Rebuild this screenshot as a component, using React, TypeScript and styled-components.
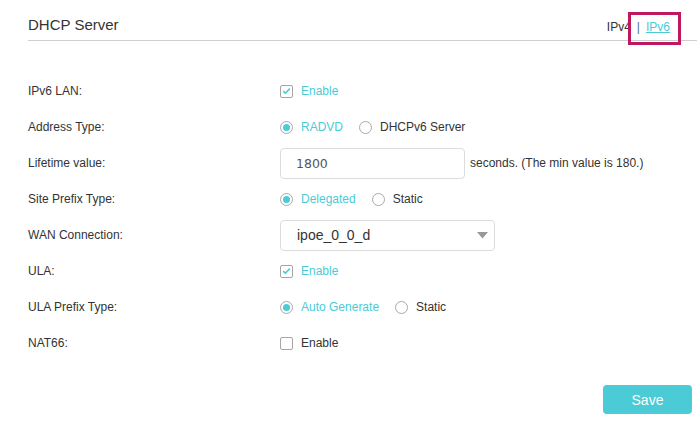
import React from "react";
import styled, { createGlobalStyle } from "styled-components";

const Global = createGlobalStyle`
  html, body { margin: 0; padding: 0; background: #fff; }
  body { font-family: "Liberation Sans", Arial, sans-serif; color: #333; }
`;

const CYAN = "#4acbd6";

const Page = styled.div`
  width: 697px;
  height: 424px;
  box-sizing: border-box;
  padding-left: 28px;
  display: flex;
  flex-direction: column;
`;

const Header = styled.div`
  height: 40px;
  border-bottom: 1px solid #cfcfcf;
  display: flex;
  align-items: flex-end;
  justify-content: space-between;
  box-sizing: content-box;
`;

const Title = styled.h2`
  margin: 0 0 6px 0;
  font-size: 15px;
  font-weight: normal;
  line-height: 18px;
  color: #333;
`;

const Switcher = styled.div`
  display: flex;
  align-items: center;
  font-size: 12px;
  line-height: 14px;
  margin: 0 27px 6px 0;
  color: #333;
`;

const Sep = styled.span`
  margin: 0 6px;
  color: #4a6f9c;
`;

const ActiveLink = styled.a`
  position: relative;
  display: inline-block;
  color: ${CYAN};
  text-decoration: underline;
  cursor: pointer;
  &::after {
    content: "";
    position: absolute;
    left: -18px;
    top: -8px;
    width: 47px;
    height: 27px;
    border: 3px solid #c0185e;
  }
`;

const Form = styled.div`
  margin-top: 32px;
  display: flex;
  flex-direction: column;
`;

const Row = styled.div`
  height: 36px;
  display: flex;
  align-items: center;
`;

const Label = styled.div`
  width: 252px;
  font-size: 12px;
  color: #333;
  flex-shrink: 0;
`;

const Controls = styled.div`
  display: flex;
  align-items: center;
  gap: 16px;
`;

const Option = styled.label<{ $active?: boolean }>`
  display: flex;
  align-items: center;
  gap: 8px;
  font-size: 12px;
  color: ${(p) => (p.$active ? CYAN : "#333")};
`;

const RadioCircle = styled.span<{ $on?: boolean }>`
  width: 11px;
  height: 11px;
  border: 1px solid #a9a9a9;
  border-radius: 50%;
  display: inline-flex;
  align-items: center;
  justify-content: center;
  &::after {
    content: "";
    width: 7px;
    height: 7px;
    border-radius: 50%;
    background: ${(p) => (p.$on ? CYAN : "transparent")};
  }
`;

const CheckBox = styled.span`
  width: 11px;
  height: 11px;
  border: 1px solid #a5a5a5;
  border-radius: 2px;
  display: inline-flex;
  align-items: center;
  justify-content: center;
`;

const TextBox = styled.div`
  width: 185px;
  height: 31px;
  box-sizing: border-box;
  border: 1px solid #dcdcdc;
  border-radius: 4px;
  display: flex;
  align-items: center;
  padding-left: 15px;
  font-family: "DejaVu Sans", Verdana, sans-serif;
  font-size: 12.5px;
  color: #555;
`;

const Hint = styled.span`
  margin-left: 5px;
  font-size: 12px;
  color: #333;
`;

const SelectBox = styled.div`
  width: 215px;
  height: 31px;
  box-sizing: border-box;
  border: 1px solid #dcdcdc;
  border-radius: 4px;
  display: flex;
  align-items: center;
  justify-content: space-between;
  padding: 0 6px 0 16px;
  font-size: 14px;
  color: #333;
`;

const Footer = styled.div`
  display: flex;
  justify-content: flex-end;
  padding-right: 5px;
  margin-top: 24px;
`;

const SaveButton = styled.button`
  width: 89px;
  height: 29px;
  border: none;
  border-radius: 4px;
  background: ${CYAN};
  color: #fff;
  font-family: "Liberation Sans", Arial, sans-serif;
  font-size: 14px;
  cursor: pointer;
`;

const Radio = ({ on, text }: { on?: boolean; text: string }) => (
  <Option $active={on}>
    <RadioCircle $on={on} />
    {text}
  </Option>
);

const Check = ({ on, text }: { on?: boolean; text: string }) => (
  <Option $active={on}>
    <CheckBox>
      {on && (
        <svg width="9" height="8" viewBox="0 0 9 8">
          <path d="M1.2 4.2 L3.4 6.2 L7.8 1.6" fill="none" stroke={CYAN} strokeWidth="1.6" />
        </svg>
      )}
    </CheckBox>
    {text}
  </Option>
);

export default function App() {
  return (
    <>
      <Global />
      <Page>
        <Header>
          <Title>DHCP Server</Title>
          <Switcher>
            <span>IPv4</span>
            <Sep>|</Sep>
            <ActiveLink>IPv6</ActiveLink>
          </Switcher>
        </Header>
        <Form>
          <Row>
            <Label>IPv6 LAN:</Label>
            <Controls>
              <Check on text="Enable" />
            </Controls>
          </Row>
          <Row>
            <Label>Address Type:</Label>
            <Controls>
              <Radio on text="RADVD" />
              <Radio text="DHCPv6 Server" />
            </Controls>
          </Row>
          <Row>
            <Label>Lifetime value:</Label>
            <Controls>
              <TextBox>1800</TextBox>
            </Controls>
            <Hint>seconds. (The min value is 180.)</Hint>
          </Row>
          <Row>
            <Label>Site Prefix Type:</Label>
            <Controls>
              <Radio on text="Delegated" />
              <Radio text="Static" />
            </Controls>
          </Row>
          <Row>
            <Label>WAN Connection:</Label>
            <SelectBox>
              <span>ipoe_0_0_d</span>
              <svg width="11" height="7" viewBox="0 0 11 7">
                <path d="M0 0 H11 L5.5 6.5 Z" fill="#999" />
              </svg>
            </SelectBox>
          </Row>
          <Row>
            <Label>ULA:</Label>
            <Controls>
              <Check on text="Enable" />
            </Controls>
          </Row>
          <Row>
            <Label>ULA Prefix Type:</Label>
            <Controls>
              <Radio on text="Auto Generate" />
              <Radio text="Static" />
            </Controls>
          </Row>
          <Row>
            <Label>NAT66:</Label>
            <Controls>
              <Check text="Enable" />
            </Controls>
          </Row>
        </Form>
        <Footer>
          <SaveButton>Save</SaveButton>
        </Footer>
      </Page>
    </>
  );
}
